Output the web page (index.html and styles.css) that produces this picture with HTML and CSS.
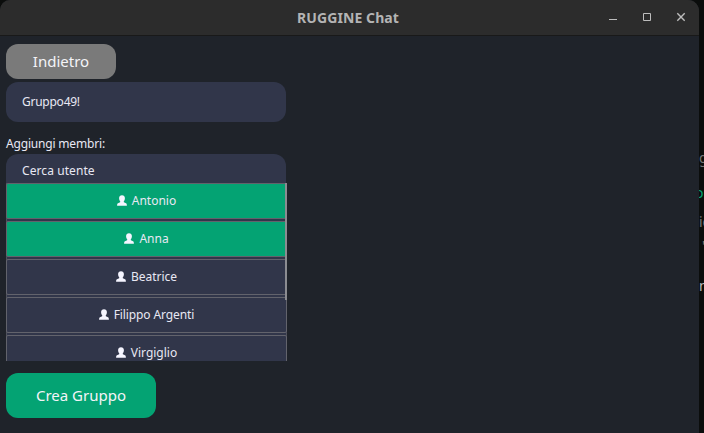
FILE: index.html
```html
<!DOCTYPE html>
<html lang="it">
<head>
<meta charset="utf-8">
<title>RUGGINE Chat</title>
<link rel="stylesheet" href="styles.css">
</head>
<body>
<svg width="0" height="0" class="defs"><symbol id="user" viewBox="0 0 10 11"><path d="M5 .2C3.200.2 2.100 1.300 2.100 3.100c0 1.400.4 2.600 1.200 3.400L3.100 7.200 1 8.200C.4 8.500.1 9.300.1 10.800h9.800C9.900 9.300 9.600 8.500 9 8.200L6.900 7.200l-.2-.7c.8-.8 1.200-2 1.200-3.400C7.900 1.300 6.800.2 5 .2z"/></symbol></svg>
<div class="desktop">
  <div class="window">
    <header class="titlebar">
      <h1>RUGGINE Chat</h1>
      <div class="controls">
        <svg width="12" height="12" viewBox="0 0 12 12"><path d="M2 8.500h8"/></svg>
        <svg width="12" height="12" viewBox="0 0 12 12"><path d="M2.500 2.500h7v7h-7z"/></svg>
        <svg width="12" height="12" viewBox="0 0 12 12"><path class="cross" d="M2.300 2.300l7.400 7.400M9.700 2.300L2.300 9.700"/></svg>
      </div>
    </header>
    <main>
      <button class="back">Indietro</button>
      <div class="field name"><span>Gruppo49!</span></div>
      <div class="label"><span>Aggiungi membri:</span></div>
      <div class="field search"><span>Cerca utente</span></div>
      <div class="list">
        <div class="row on"><svg><use href="#user"/></svg><span>Antonio</span></div>
        <div class="row on"><svg><use href="#user"/></svg><span>Anna</span></div>
        <div class="row"><svg><use href="#user"/></svg><span>Beatrice</span></div>
        <div class="row"><svg><use href="#user"/></svg><span class="long">Filippo Argenti</span></div>
        <div class="row"><svg><use href="#user"/></svg><span>Virgiglio</span></div>
        <div class="thumb"></div>
      </div>
      <button class="create">Crea Gruppo</button>
    </main>
  </div>
  <aside class="behind">
    <p>g</p><p class="accent">o</p><p>ic</p><p class="tick">'</p><p class="bright">n</p>
  </aside>
</div>
</body>
</html>
```

FILE: styles.css
```css
* { box-sizing: border-box; }
body { margin: 0; background: #0b0d0c; font-family: "Noto Sans", "Open Sans", sans-serif; color: #e8e8f4; }
.defs { display: block; height: 0; }
.desktop { display: flex; width: 704px; height: 433px; overflow: hidden; background: #0b0d0c; }
.window { flex: none; width: 699px; height: 433px; background: #1f232a; border-radius: 10px 11px 0 0; overflow: hidden; }
.titlebar { position: relative; display: flex; align-items: center; justify-content: center; height: 36px; background: #2c2c2c; border-bottom: 1px solid #191919; }
h1 { margin: 0 3px 0 0; font-size: 14px; line-height: 20px; font-weight: 700; color: #b4b4b4; white-space: nowrap; letter-spacing: .1px; }
.controls { position: absolute; right: 12px; top: 11px; display: flex; gap: 22px; }
.controls svg { fill: none; stroke: #bdbdbd; stroke-width: 1; }
.controls .cross { stroke-width: 1.4; }
main { display: flex; flex-direction: column; align-items: flex-start; padding: 8px 6px 0; }
button { border: 0; padding: 0 0 2px; color: #f4f4f8; font-family: inherit; font-size: 15px; white-space: nowrap; }
.back { width: 110px; height: 35px; border-radius: 12px; background: #7a7a7a; margin-bottom: 3px; }
.field { width: 280px; padding-left: 16px; background: #31364a; font-size: 12px; white-space: nowrap; }
.name { height: 40px; line-height: 40px; border-radius: 12px; letter-spacing: -.25px; }
.label { height: 32px; padding-top: 13px; font-size: 12px; line-height: 18px; letter-spacing: -.18px; white-space: nowrap; }
.search { height: 29px; line-height: 34px; border-radius: 12px 12px 0 0; letter-spacing: .08px; }
.list { position: relative; width: 281px; height: 178px; overflow: hidden; background: #31364a; box-shadow: inset 1px 0 #50525d, inset -1px 0 #50525d; }
.row { display: flex; align-items: center; justify-content: center; gap: 5px; height: 36px; margin-bottom: 2px; padding-bottom: 1px; border: 1px solid #62636c; border-radius: 2px; font-size: 12px; line-height: 18px; white-space: nowrap; }
.row svg { width: 10px; height: 11px; fill: #f5f5ff; }
.row .long { letter-spacing: -.1px; }
.on { background: #04a373; }
.thumb { position: absolute; right: 0; top: 0; width: 2px; height: 117px; background: #8b8c91; }
.create { width: 150px; height: 45px; margin-top: 12px; border-radius: 12px; background: #04a373; }
.behind { width: 5px; padding-top: 148px; overflow: hidden; font-size: 14px; color: #777; }
.behind p { margin: 0; height: 20px; line-height: 20px; }
.behind .accent { color: #04a373; margin: 15px 0 9px -4px; }
.behind .tick { margin: 4px 0 20px 3px; }
.behind .bright { color: #bbb; }
```
